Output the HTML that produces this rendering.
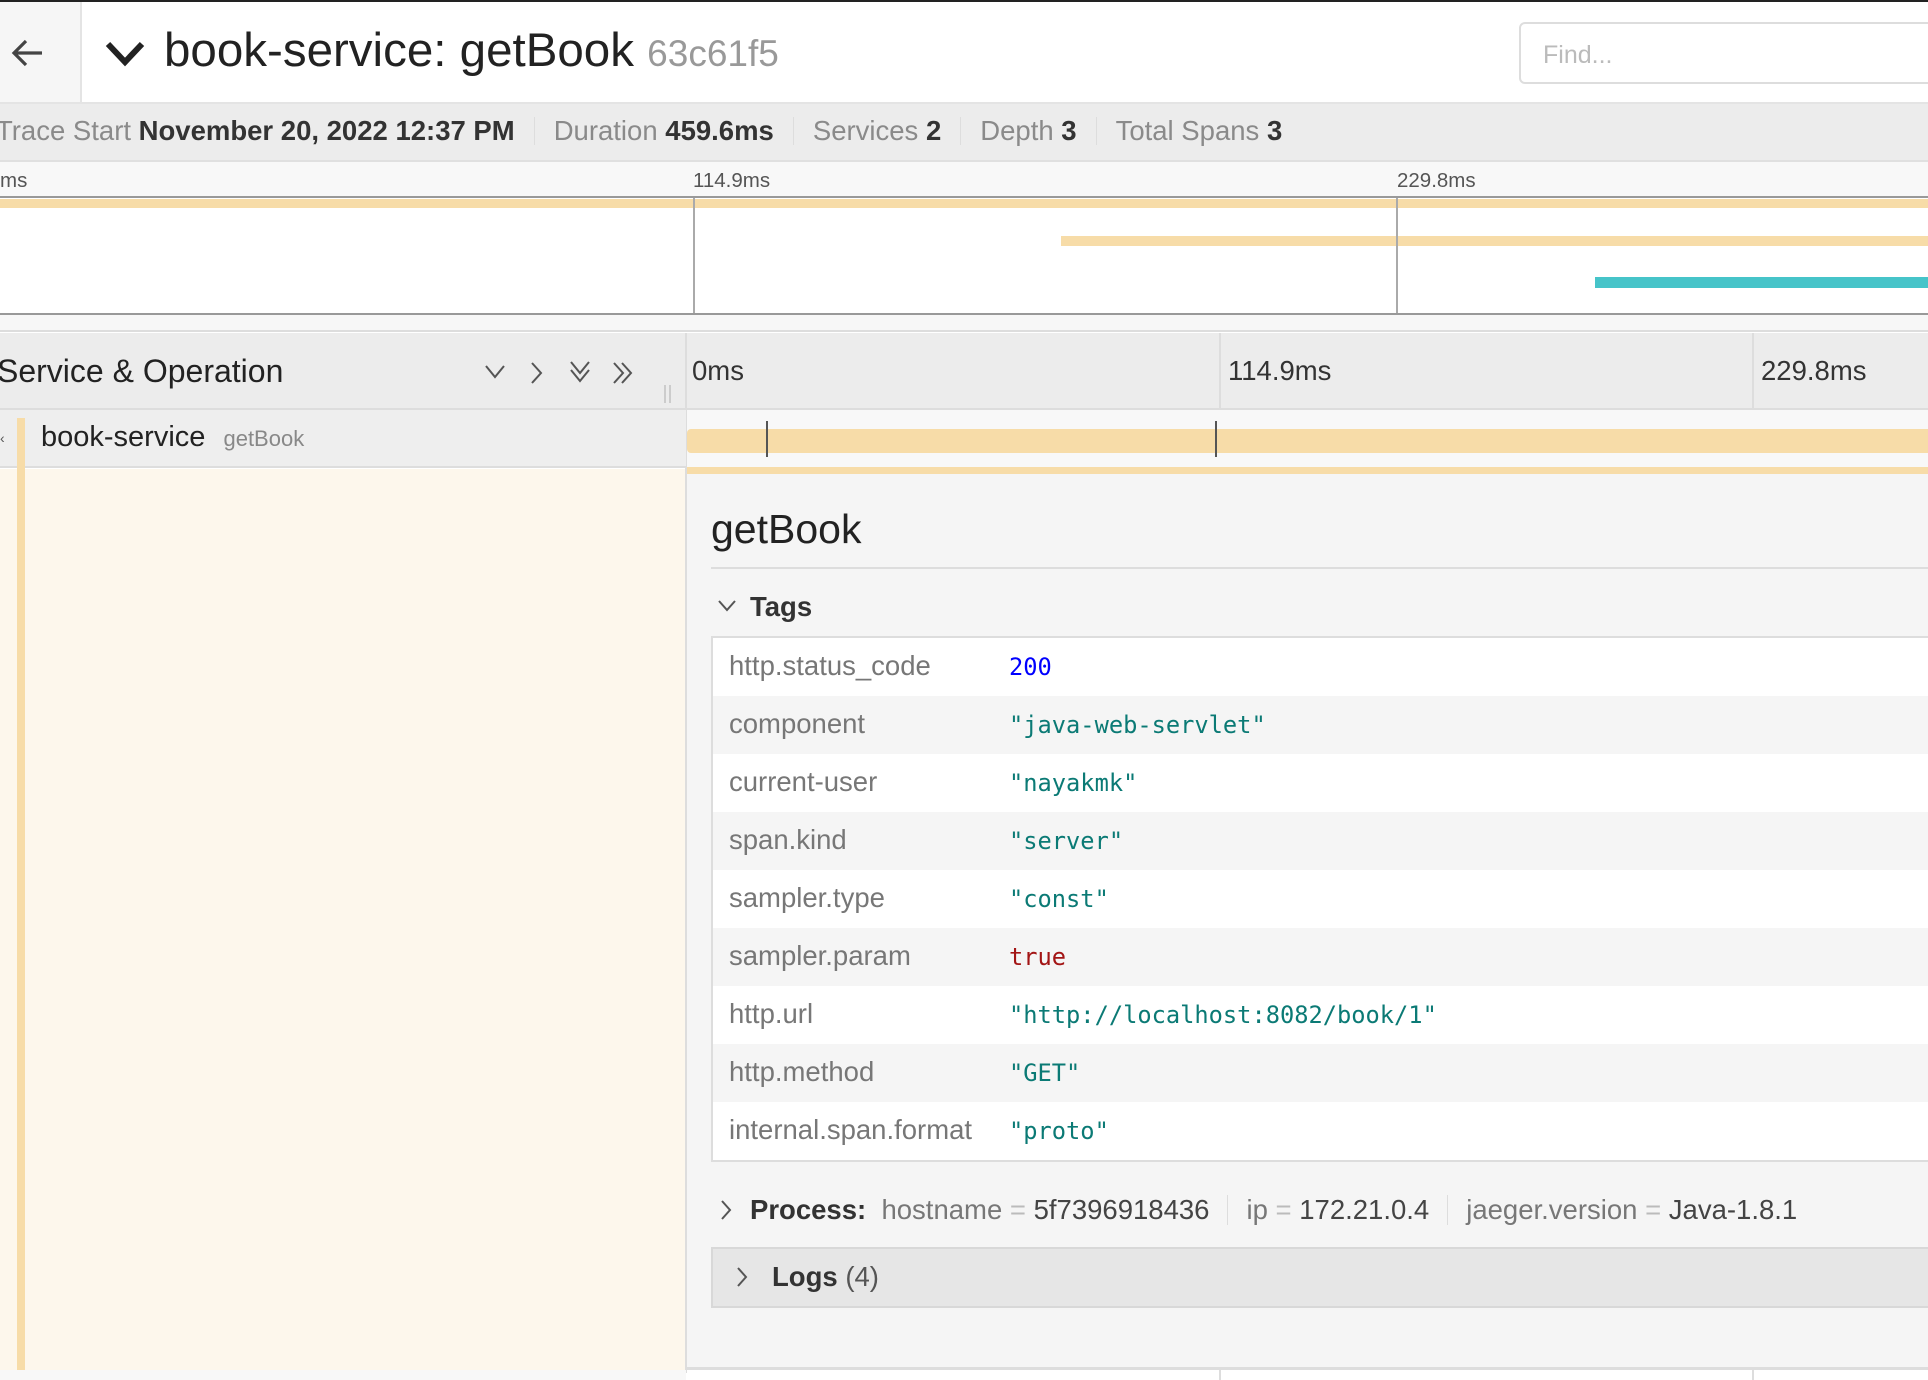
<!DOCTYPE html>
<html><head><meta charset="utf-8"><style>
*{box-sizing:border-box;margin:0;padding:0}
body{width:1928px;height:1380px;overflow:hidden;background:#fff;font-family:"Liberation Sans",Arial,sans-serif;position:relative;color:#222}
.a{position:absolute}
.mono{font-family:"DejaVu Sans Mono","Liberation Mono",monospace}
.k{left:16px;top:12px;font-size:27.5px;color:#777}
.v{left:296px;top:15px;font-size:23.7px}
</style></head><body>
<div class="a" style="left:0;top:0;width:1928px;height:2px;background:#222"></div>
<!-- header -->
<div class="a" style="left:0;top:2px;width:82px;height:100px;background:#f6f6f6;border-right:2px solid #e4e4e4"></div>
<svg class="a" style="left:10px;top:36px" width="34" height="34" viewBox="0 0 34 34"><path d="M32 17H4M16 5L4 17l12 12" fill="none" stroke="#444" stroke-width="3.2"/></svg>
<svg class="a" style="left:104px;top:38px" width="42" height="30" viewBox="0 0 42 30"><path d="M4 6l17 18L38 6" fill="none" stroke="#222" stroke-width="6"/></svg>
<div class="a" style="left:164px;top:21px;font-size:47.5px;line-height:60px;color:#222;white-space:nowrap">book-service: getBook <span style="color:#999;font-size:37px">63c61f5</span></div>
<div class="a" style="left:1519px;top:22px;width:430px;height:62px;border:2px solid #ddd;border-radius:6px;font-size:25px;color:#bbb;padding:17px 0 0 22px">Find...</div>
<!-- summary -->
<div class="a" style="left:0;top:102px;width:1928px;height:60px;background:#ececec;border-top:2px solid #e4e4e4;border-bottom:2px solid #e0e0e0"></div>
<div class="a" style="left:-4px;top:116px;font-size:27.5px;line-height:30px;color:#8a8a8a;white-space:nowrap">Trace Start <b style="color:#333">November 20, 2022 12:37 PM</b><span style="display:inline-block;width:1px;height:28px;background:#ddd;margin:0 19px -5px"></span>Duration <b style="color:#333">459.6ms</b><span style="display:inline-block;width:1px;height:28px;background:#ddd;margin:0 19px -5px"></span>Services <b style="color:#333">2</b><span style="display:inline-block;width:1px;height:28px;background:#ddd;margin:0 19px -5px"></span>Depth <b style="color:#333">3</b><span style="display:inline-block;width:1px;height:28px;background:#ddd;margin:0 19px -5px"></span>Total Spans <b style="color:#333">3</b></div>
<!-- minimap -->
<div class="a" style="left:0;top:162px;width:1928px;height:35px;background:#f8f8f8"></div>
<div class="a" style="left:0;top:169px;font-size:20.5px;color:#555">ms</div>
<div class="a" style="left:693px;top:169px;font-size:20.5px;color:#555">114.9ms</div>
<div class="a" style="left:1397px;top:169px;font-size:20.5px;color:#555">229.8ms</div>
<div class="a" style="left:0;top:196px;width:1928px;height:2px;background:#999"></div>
<div class="a" style="left:0;top:199px;width:1928px;height:9px;background:#f7dca8"></div>
<div class="a" style="left:1061px;top:236px;width:867px;height:10px;background:#f7dca8"></div>
<div class="a" style="left:1595px;top:277px;width:333px;height:11px;background:#46c4c9"></div>
<div class="a" style="left:693px;top:198px;width:2px;height:116px;background:#aaa"></div>
<div class="a" style="left:1396px;top:198px;width:2px;height:116px;background:#aaa"></div>
<div class="a" style="left:0;top:313px;width:1928px;height:2px;background:#999"></div>
<div class="a" style="left:0;top:315px;width:1928px;height:17px;background:#f7f7f7;border-bottom:2px solid #ddd"></div>
<!-- column header -->
<div class="a" style="left:0;top:333px;width:1928px;height:77px;background:#ececec;border-bottom:2px solid #ddd"></div>
<div class="a" style="left:-3px;top:353px;font-size:32px;color:#222;white-space:nowrap">Service &amp; Operation</div>
<svg class="a" style="left:482px;top:358px" width="170" height="30" viewBox="0 0 170 30">
<g fill="none" stroke="#555" stroke-width="2"><path d="M4 8l9 11 9-11"/><path d="M50 5l9 10-9 10"/><path d="M89 4l9 11 9-11M89 12l9 11 9-11"/><path d="M132 5l9 10-9 10M140 5l9 10-9 10"/></g></svg>
<div class="a" style="left:664px;top:385px;width:2px;height:18px;background:#ccc"></div><div class="a" style="left:669px;top:385px;width:2px;height:18px;background:#ccc"></div>
<div class="a" style="left:685px;top:333px;width:2px;height:1040px;background:#ddd"></div>
<div class="a" style="left:692px;top:355px;font-size:27.5px;color:#333">0ms</div>
<div class="a" style="left:1219px;top:333px;width:2px;height:135px;background:#ddd"></div>
<div class="a" style="left:1228px;top:355px;font-size:27.5px;color:#333">114.9ms</div>
<div class="a" style="left:1752px;top:333px;width:2px;height:135px;background:#ddd"></div>
<div class="a" style="left:1761px;top:355px;font-size:27.5px;color:#333">229.8ms</div>
<!-- span row -->
<div class="a" style="left:0;top:410px;width:686px;height:58px;background:#eeeeee;border-bottom:2px solid #ddd"></div>
<div class="a" style="left:687px;top:410px;width:1241px;height:58px;background:#f8f8f8"></div>
<div class="a" style="left:0;top:430px;font-size:14px;color:#555">‹</div>
<div class="a" style="left:17px;top:418px;width:8px;height:953px;background:#f7dca8"></div>
<div class="a" style="left:41px;top:421px;font-size:29px;color:#222;white-space:nowrap">book-service <span style="font-size:22px;color:#888;margin-left:10px">getBook</span></div>
<div class="a" style="left:687px;top:429px;width:1241px;height:24px;background:#f7dca8;border-radius:4px 0 0 4px"></div>
<div class="a" style="left:766px;top:421px;width:2px;height:36px;background:#555"></div>
<div class="a" style="left:1215px;top:421px;width:2px;height:36px;background:#555"></div>
<div class="a" style="left:687px;top:467px;width:1241px;height:7px;background:#f7dca8"></div>
<!-- left cream -->
<div class="a" style="left:25px;top:469px;width:660px;height:902px;background:#fdf7ec"></div>
<div class="a" style="left:0;top:469px;width:17px;height:902px;background:#fdf7ec"></div>
<!-- detail -->
<div class="a" style="left:687px;top:474px;width:1241px;height:896px;background:#f5f5f5"></div>
<div class="a" style="left:711px;top:506px;font-size:41px;color:#222">getBook</div>
<div class="a" style="left:711px;top:567px;width:1217px;height:2px;background:#ddd"></div>
<svg class="a" style="left:716px;top:597px" width="22" height="16" viewBox="0 0 22 16"><path d="M3 4l8 9 8-9" fill="none" stroke="#555" stroke-width="2"/></svg>
<div class="a" style="left:750px;top:591px;font-size:27.5px;font-weight:bold;color:#333">Tags</div>
<div class="a" style="left:711px;top:636px;width:1230px;height:526px;border:2px solid #ddd;background:#fff"></div>
<div class="a" style="left:713px;top:638px;width:1215px">
<div style="height:58px;background:#fff;position:relative"><span class="a k">http.status_code</span><span class="a mono v" style="color:#00f">200</span></div>
<div style="height:58px;background:#f5f5f5;position:relative"><span class="a k">component</span><span class="a mono v" style="color:#0b7a75">"java-web-servlet"</span></div>
<div style="height:58px;background:#fff;position:relative"><span class="a k">current-user</span><span class="a mono v" style="color:#0b7a75">"nayakmk"</span></div>
<div style="height:58px;background:#f5f5f5;position:relative"><span class="a k">span.kind</span><span class="a mono v" style="color:#0b7a75">"server"</span></div>
<div style="height:58px;background:#fff;position:relative"><span class="a k">sampler.type</span><span class="a mono v" style="color:#0b7a75">"const"</span></div>
<div style="height:58px;background:#f5f5f5;position:relative"><span class="a k">sampler.param</span><span class="a mono v" style="color:#a31515">true</span></div>
<div style="height:58px;background:#fff;position:relative"><span class="a k">http.url</span><span class="a mono v" style="color:#0b7a75">"http://localhost:8082/book/1"</span></div>
<div style="height:58px;background:#f5f5f5;position:relative"><span class="a k">http.method</span><span class="a mono v" style="color:#0b7a75">"GET"</span></div>
<div style="height:58px;background:#fff;position:relative"><span class="a k">internal.span.format</span><span class="a mono v" style="color:#0b7a75">"proto"</span></div>
</div>
<svg class="a" style="left:718px;top:1198px" width="16" height="24" viewBox="0 0 16 24"><path d="M4 3l8 9-8 9" fill="none" stroke="#555" stroke-width="2"/></svg>
<div class="a" style="left:750px;top:1194px;font-size:27.5px;color:#777;white-space:nowrap"><b style="color:#333">Process:</b>&nbsp; hostname <span style="color:#bbb">=</span> <span style="color:#444">5f7396918436</span><span style="display:inline-block;width:1px;height:30px;background:#ddd;margin:0 18px -6px"></span>ip <span style="color:#bbb">=</span> <span style="color:#444">172.21.0.4</span><span style="display:inline-block;width:1px;height:30px;background:#ddd;margin:0 18px -6px"></span>jaeger.version <span style="color:#bbb">=</span> <span style="color:#444">Java-1.8.1</span></div>
<div class="a" style="left:711px;top:1247px;width:1230px;height:61px;background:#e6e6e6;border:2px solid #d8d8d8"></div>
<svg class="a" style="left:734px;top:1265px" width="16" height="24" viewBox="0 0 16 24"><path d="M4 3l8 9-8 9" fill="none" stroke="#555" stroke-width="2"/></svg>
<div class="a" style="left:772px;top:1261px;font-size:27.5px;color:#555;white-space:nowrap"><b style="color:#333">Logs</b> (4)</div>
<div class="a" style="left:686px;top:1367px;width:1242px;height:3px;background:#ddd"></div>
<div class="a" style="left:0;top:1370px;width:686px;height:10px;background:#f8f8f8"></div>
<div class="a" style="left:1219px;top:1370px;width:2px;height:10px;background:#ddd"></div>
<div class="a" style="left:1752px;top:1370px;width:2px;height:10px;background:#ddd"></div>
</body></html>
